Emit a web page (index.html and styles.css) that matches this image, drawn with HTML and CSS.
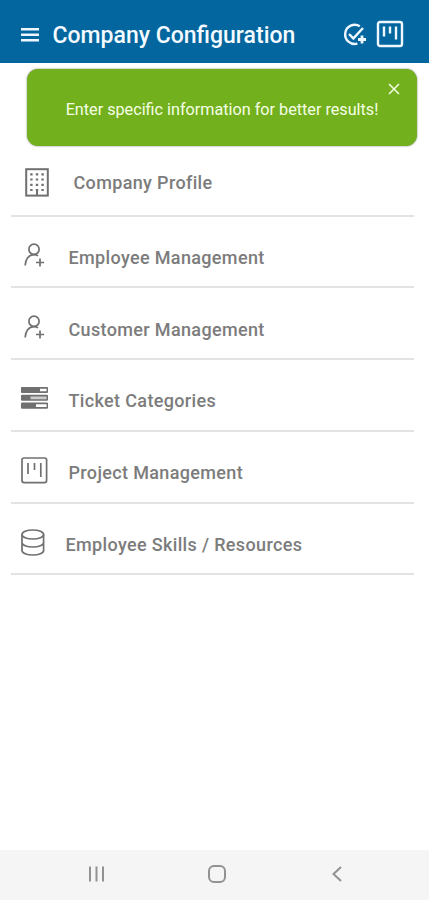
FILE: index.html
```
<!DOCTYPE html>
<html lang="en">
  <head>
    <meta charset="UTF-8" />
    <meta name="viewport" content="width=device-width, initial-scale=1.0" />
    <title>Company Configuration</title>
    <link rel="stylesheet" href="styles.css">
  </head>
  <body>
    <header class="topbar">
      <svg class="menu-icon" width="20" height="16" viewBox="0 0 20 16">
        <path d="M1 2.2h18M1 7.7h18M1 13.2h18" />
      </svg>
      <h1>Company Configuration</h1>
      <svg class="task-icon" width="26" height="26" viewBox="0 0 26 26">
        <path d="M17.8 4.2A9.6 9.6 0 1 0 15.4 21.6" />
        <path d="M7 12l4.4 4.4L21 6" />
        <path class="plus" d="M20 13.5v8M16 17.5h8" />
      </svg>
      <svg class="board-icon" width="28" height="28" viewBox="0 0 28 28">
        <rect x="2" y="2" width="24" height="24" rx="2" />
        <path d="M8 6.5v10M14 6.5v7M20 6.5v13" />
      </svg>
    </header>

    <div class="alert">
      <p>Enter specific information for better results!</p>
      <svg class="close" width="12" height="12" viewBox="0 0 12 12">
        <path d="M1 1l10 10M11 1L1 11" />
      </svg>
    </div>

    <ul class="menu">
      <li class="profile">
        <svg width="24" height="29" viewBox="0 0 24 29">
          <rect x="1.2" y="1.2" width="21.6" height="26.4" stroke-width="2" />
          <path d="M5.2 6.3h14M5.2 11.5h14M5.2 16.8h14M5.2 22h14" stroke-width="2.2" stroke-dasharray="2.4 3.2" />
          <path d="M12 21.5v6" stroke-width="2" />
        </svg>
        <span>Company Profile</span>
      </li>
      <li class="person">
        <svg width="21" height="24" viewBox="0 0 21 24">
          <circle cx="10" cy="6.3" r="5.1" />
          <path d="M1.2 22.5c0-6.2 3.6-10.8 8.8-10.8 1.5 0 2.8.4 4 1.2M16 15.5v8M12 19.5h8" />
        </svg>
        <span>Employee Management</span>
      </li>
      <li class="person">
        <svg width="21" height="24" viewBox="0 0 21 24">
          <circle cx="10" cy="6.3" r="5.1" />
          <path d="M1.2 22.5c0-6.2 3.6-10.8 8.8-10.8 1.5 0 2.8.4 4 1.2M16 15.5v8M12 19.5h8" />
        </svg>
        <span>Customer Management</span>
      </li>
      <li class="ticket">
        <svg width="27" height="22" viewBox="0 0 27 22">
          <rect x=".6" y=".8" width="25.8" height="4.4" rx=".6" />
          <rect class="track" x=".6" y="8.6" width="25.8" height="4.4" rx=".6" />
          <rect x=".6" y="16.4" width="25.8" height="4.4" rx=".6" />
          <path class="fill" d="M0 .8h19v4.4H0zM0 8.6h9.5v4.4H0zM0 16.4h15v4.4H0z" />
        </svg>
        <span>Ticket Categories</span>
      </li>
      <li class="project">
        <svg width="27" height="27" viewBox="0 0 27 27">
          <rect x="1" y="1" width="24.6" height="24.6" rx="2" />
          <path d="M7 6v11M13.5 6v7M19.8 6v14" />
        </svg>
        <span>Project Management</span>
      </li>
      <li class="skills">
        <svg width="24" height="27" viewBox="0 0 24 27">
          <ellipse cx="11.8" cy="5.5" rx="10.8" ry="4.5" />
          <path d="M1 5.5v16c0 2.5 4.8 4.5 10.8 4.5s10.8-2 10.8-4.5v-16M1 13.5c0 2.5 4.8 4.5 10.8 4.5s10.8-2 10.8-4.5" />
        </svg>
        <span>Employee Skills / Resources</span>
      </li>
    </ul>

    <nav class="system-nav">
      <svg width="18" height="18" viewBox="0 0 18 18">
        <path d="M2 1.5v15M8.5 1.5v15M15 1.5v15" />
      </svg>
      <svg width="18" height="18" viewBox="0 0 18 18">
        <rect x="1" y="1" width="16" height="16" rx="5" />
      </svg>
      <svg width="18" height="18" viewBox="0 0 18 18">
        <path d="M13 2L5.5 9l7.5 7" />
      </svg>
    </nav>
  </body>
</html>
```
FILE: styles.css
```
* {
  box-sizing: border-box;
}

body {
  margin: 0;
  height: 100vh;
  display: flex;
  flex-direction: column;
  font-family: Roboto, sans-serif;
  background-color: #fff;
}

svg {
  flex: none;
  fill: none;
  stroke: #707070;
  stroke-width: 1.7;
}

.topbar {
  height: 63px;
  display: flex;
  align-items: center;
  padding: 7px 25px 0 20px;
  background-color: #03669e;
}

.topbar svg {
  stroke: #eef7ff;
  stroke-width: 2.4;
}

.topbar h1 {
  flex: 1;
  margin: 1px 0 0 12.5px;
  font-size: 23px;
  font-weight: 500;
  line-height: 28px;
  white-space: nowrap;
  color: #f4faff;
}

.topbar .menu-icon {
  margin-top: -1px;
}

.topbar .task-icon {
  margin-right: 8px;
}

.topbar .board-icon {
  margin-top: -3px;
}

.topbar .plus {
  stroke-width: 2.8;
}

.alert {
  position: relative;
  height: 77px;
  margin: 6px 12px 0 27px;
  display: flex;
  align-items: center;
  justify-content: center;
  border-radius: 11px;
  background-color: #72b01d;
  box-shadow: 0 0 2px #777;
}

.alert p {
  margin: 3px 0 0;
  font-size: 16.2px;
  white-space: nowrap;
  color: #f5ffe5;
}

.close {
  position: absolute;
  top: 14px;
  right: 17px;
  stroke: #f5ffe5;
  stroke-width: 1.5;
}

.menu {
  flex: 1;
  margin: 0;
  padding: 0 15px 0 11px;
  list-style: none;
}

.menu li {
  height: 71.8px;
  display: flex;
  align-items: center;
  padding: 7px 0 0 10px;
  border-bottom: 2px solid #e3e3e3;
  font-size: 18px;
  font-weight: 500;
  letter-spacing: 0.35px;
  white-space: nowrap;
  color: #7c7c7c;
}

.menu span {
  margin: 5px 0 0 20.5px;
}

.menu .profile {
  height: 70.5px;
  padding: 5px 0 0 14px;
}

.menu .profile span {
  margin: 0 0 0 24.5px;
}

.menu .person {
  padding-left: 13px;
}

.menu .person span {
  margin-left: 23.5px;
}

.menu .track {
  fill: #ccc;
}

.menu .fill {
  fill: #707070;
  stroke: none;
}

.system-nav {
  height: 50px;
  display: flex;
  justify-content: space-between;
  align-items: center;
  padding: 0 83px 2px 88px;
  background-color: #f5f5f5;
}

.system-nav svg {
  stroke: #929292;
  stroke-width: 2;
}
```
